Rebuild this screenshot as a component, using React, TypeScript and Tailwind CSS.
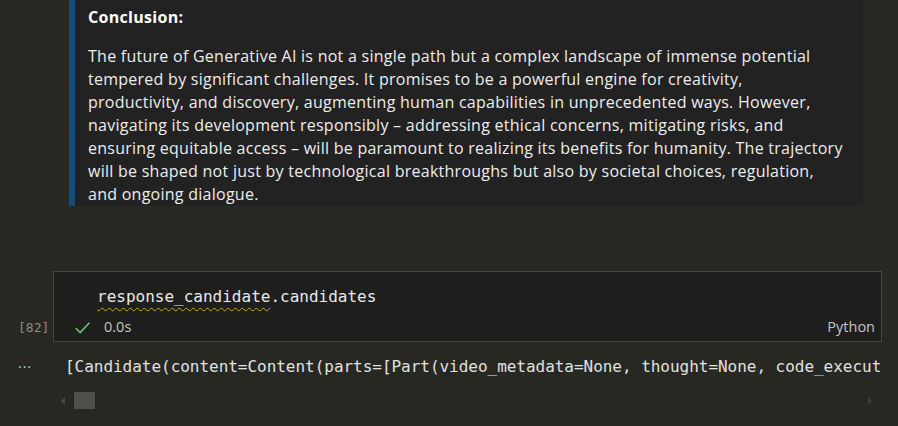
import React from "react";

const sans = { fontFamily: '"Open Sans", "Noto Sans", sans-serif' };
const mono = { fontFamily: '"DejaVu Sans Mono", "Liberation Mono", monospace' };

export default function App() {
  const lines = [
    "The future of Generative AI is not a single path but a complex landscape of immense potential",
    "tempered by significant challenges. It promises to be a powerful engine for creativity,",
    "productivity, and discovery, augmenting human capabilities in unprecedented ways. However,",
    "navigating its development responsibly – addressing ethical concerns, mitigating risks, and",
    "ensuring equitable access – will be paramount to realizing its benefits for humanity. The trajectory",
    "will be shaped not just by technological breakthroughs but also by societal choices, regulation,",
    "and ongoing dialogue.",
  ];
  return (
    <div className="w-[898px] h-[426px] overflow-hidden bg-[#282823] relative">
      {/* Markdown blockquote */}
      <div className="ml-[69px] w-[794px] h-[206px] bg-[#222222] border-l-[6px] border-[#144d7a] pl-[13px] pt-[6px] text-[#ededed]" style={sans}>
        <div className="text-[16px] leading-[23px] font-bold text-white tracking-[0.3px]">Conclusion:</div>
        <div className="mt-[16px] text-[16px] leading-[23px] tracking-[0.26px] whitespace-nowrap">
          {lines.map((l, i) => (
            <div key={i}>{l}</div>
          ))}
        </div>
      </div>

      {/* Code cell */}
      <div className="mt-[65px] flex">
        <div className="w-[53px] shrink-0 flex flex-col justify-end pb-[6px]">
          <div className="pl-[18px] text-[13px] leading-[17px] text-[#8a8a85]" style={mono}>[82]</div>
        </div>
        <div className="w-[829px] h-[71px] border border-[#46463f] bg-[#1e1e1c] flex flex-col">
          <div className="pl-[43px] pt-[14px] h-[42px] text-[16px] leading-[22px] text-[#e8e8e8]" style={mono}>
            <span className="underline decoration-wavy decoration-[#cca700] decoration-1 underline-offset-[5px]">response_candidate</span>
            .candidates
          </div>
          <div className="flex items-center h-[26px] pl-[20px] pr-[6px] text-[14.5px] text-[#c4c4c4]" style={sans}>
            <svg width="17" height="17" viewBox="0 0 16 16" className="mr-[13px]">
              <path d="M1.5 8.5 L5.8 12.8 L14.5 3.5" fill="none" stroke="#6cc070" strokeWidth="1.5" />
            </svg>
            <span>0.0s</span>
            <span className="ml-auto">Python</span>
          </div>
        </div>
      </div>

      {/* Output */}
      <div className="mt-[14px] flex items-center h-[22px]">
        <div className="w-[65px] shrink-0 pl-[18px] text-[#c8c8c8] text-[14px] leading-[14px] tracking-[1px]" style={sans}>···</div>
        <div className="whitespace-nowrap text-[16px] leading-[22px] text-[#e0e0e0] tracking-[-0.03px]" style={mono}>
          [Candidate(content=Content(parts=[Part(video_metadata=None, thought=None, code_execut
        </div>
      </div>

      {/* horizontal scrollbar */}
      <div className="mt-[14px] ml-[60px] w-[816px] h-[17px] flex items-center">
        <svg width="6" height="8" viewBox="0 0 6 8" className="mr-[8px]">
          <path d="M5 0 L1 4 L5 8 Z" fill="#4a4a45" />
        </svg>
        <div className="w-[21px] h-[17px] bg-[#4f4f4b]" />
        <svg width="6" height="8" viewBox="0 0 6 8" className="ml-auto mr-[3px]">
          <path d="M1 0 L5 4 L1 8 Z" fill="#3e3e3a" />
        </svg>
      </div>
    </div>
  );
}
